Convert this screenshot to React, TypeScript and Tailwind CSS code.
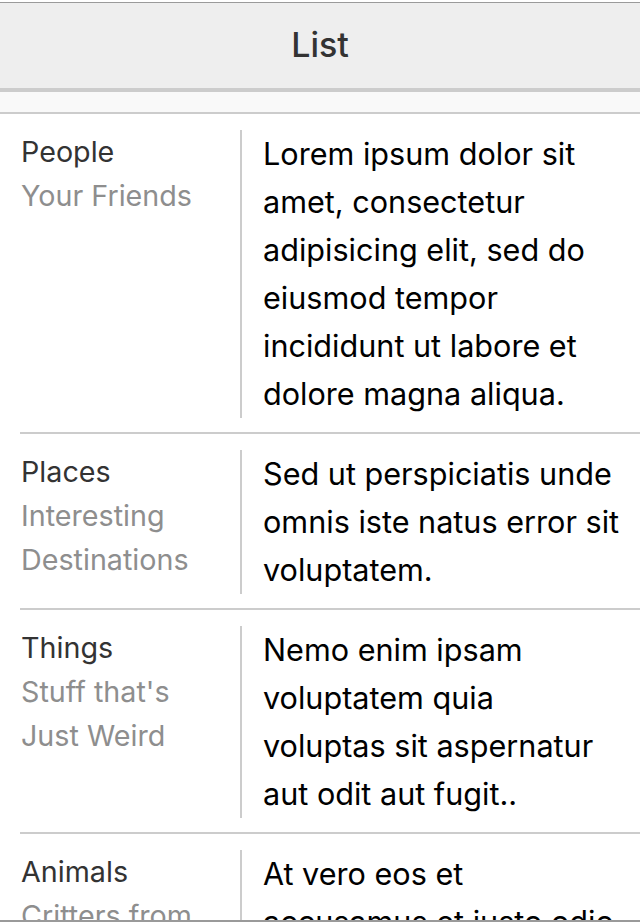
import React from "react";

const rows = [
  {
    title: "People",
    sub: "Your Friends",
    text: "Lorem ipsum dolor sit amet, consectetur adipisicing elit, sed do eiusmod tempor incididunt ut labore et dolore magna aliqua.",
  },
  {
    title: "Places",
    sub: "Interesting Destinations",
    text: "Sed ut perspiciatis unde omnis iste natus error sit voluptatem.",
  },
  {
    title: "Things",
    sub: "Stuff that's Just Weird",
    text: "Nemo enim ipsam voluptatem quia voluptas sit aspernatur aut odit aut fugit..",
  },
  {
    title: "Animals",
    sub: "Critters from Around the World",
    text: "At vero eos et accusamus et iusto odio dignissimos ducimus qui blanditiis praesentium voluptatum.",
  },
];

export default function App() {
  return (
    <div
      className="relative h-[922px] overflow-hidden bg-white"
      style={{ fontFamily: "Inter, Roboto, 'Noto Sans', sans-serif" }}
    >
      <div className="pt-[2px]">
        <div className="h-[90px] border-t border-[#9a9a9a] border-b-4 border-b-[#cccccc] bg-[#eeeeee] flex items-center justify-center">
          <span className="text-[34px] font-medium text-[#333333] leading-none pb-[2px]">List</span>
        </div>
        <div className="h-[20px] bg-[#f9f9f9]" />
        <div className="border-t-2 border-[#cccccc]">
          {rows.map((r, i) => (
            <div key={i} className={i > 0 ? "ml-[20px] border-t-2 border-[#cccccc]" : "ml-[20px]"}>
              <div className="flex pt-[16px] pb-[14px]">
                <div className="w-[220px] shrink-0 pl-[1px] text-[28.7px] leading-[44px]">
                  <div className="text-[#333333]">{r.title}</div>
                  <div className="text-[#8e8e8e] pr-[24px]">{r.sub}</div>
                </div>
                <div className="border-l-2 border-[#cccccc] flex-1 pl-[21px] pr-[18px] text-[30.6px] leading-[48px] text-black">
                  {r.text}
                </div>
              </div>
            </div>
          ))}
        </div>
      </div>
      <div className="absolute left-0 right-0 bottom-0 h-[2px] bg-[#9a9a9a]" />
    </div>
  );
}
